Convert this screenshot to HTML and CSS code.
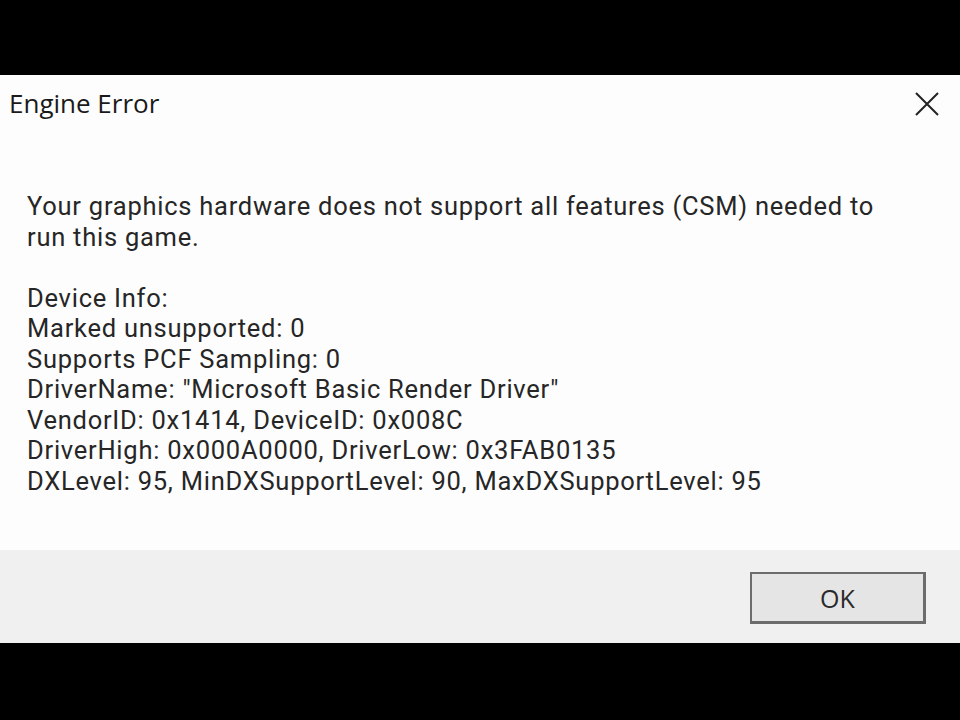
FILE: index.html
```html
<!DOCTYPE html>
<html>
<head>
<meta charset="utf-8">
<link rel="stylesheet" href="styles.css">
</head>
<body>
<div class="screen">
  <div class="dialog">
    <div class="titlebar">
      <span class="title">Engine Error</span>
      <svg class="close" width="24" height="24" viewBox="0 0 24 24"><path d="M1 1 L23 23 M23 1 L1 23" stroke="#222" stroke-width="2" fill="none"/></svg>
    </div>
    <div class="content">
      <p class="msg">Your graphics hardware does not support all features (CSM) needed to<br>run this game.</p>
      <p class="msg">Device Info:<br>Marked unsupported: 0<br>Supports PCF Sampling: 0<br>DriverName: "Microsoft Basic Render Driver"<br>VendorID: 0x1414, DeviceID: 0x008C<br>DriverHigh: 0x000A0000, DriverLow: 0x3FAB0135<br>DXLevel: 95, MinDXSupportLevel: 90, MaxDXSupportLevel: 95</p>
    </div>
    <div class="footer">
      <button class="ok">OK</button>
    </div>
  </div>
</div>
</body>
</html>
```
FILE: styles.css
```css
html, body {
  margin: 0;
  padding: 0;
  background: #000;
}
.screen {
  width: 960px;
  height: 720px;
  padding-top: 75px;
  box-sizing: border-box;
  font-family: "Open Sans", "Noto Sans", sans-serif;
  color: #1e1e1e;
}
.dialog {
  height: 568px;
  background: #fdfdfd;
  display: flex;
  flex-direction: column;
}
.titlebar {
  display: flex;
  justify-content: space-between;
  align-items: flex-start;
  padding: 10px 21px 0 9px;
  height: 36px;
}
.title {
  font-size: 26px;
  line-height: 36px;
  color: #1a1a1a;
}
.close {
  margin-top: 7px;
}
.content {
  flex: 1;
  padding: 70px 0 0 27px;
}
.msg {
  margin: 0 0 30.5px 0;
  font-family: Roboto, "Open Sans", sans-serif;
  font-size: 25.5px;
  line-height: 30.5px;
  letter-spacing: 0.75px;
  white-space: nowrap;
  color: #262626;
}
.footer {
  height: 93px;
  background: #f0f0f0;
  display: flex;
  justify-content: flex-end;
  align-items: flex-start;
  padding: 22px 34px 0 0;
  box-sizing: border-box;
}
.ok {
  width: 176px;
  height: 52px;
  background: #e5e5e5;
  border: 2px solid #6c6c6c;
  border-bottom-width: 3px;
  border-right-width: 3px;
  font-family: "Open Sans", "Noto Sans", sans-serif;
  font-size: 25px;
  color: #2a2a2a;
  padding: 0;
}
```
